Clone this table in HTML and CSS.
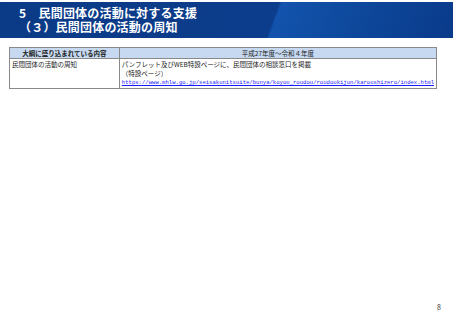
FILE: index.html
```html
<!DOCTYPE html>
<html lang="ja">
<head>
<meta charset="utf-8">
<link rel="stylesheet" href="styles.css">
</head>
<body>
<div class="page">
  <header class="band">
    <div class="title">5　民間団体の活動に対する支援</div>
    <div class="title">（３）民間団体の活動の周知</div>
  </header>
  <table class="tbl">
    <tr>
      <th class="c1">大綱に盛り込まれている内容</th>
      <th class="c2">平成27年度～令和４年度</th>
    </tr>
    <tr class="body">
      <td class="c1">民間団体の活動の周知</td>
      <td class="c2">パンフレット及びWEB特設ページに、民間団体の相談窓口を掲載<br>（特設ページ）<br><a class="link" href="#">https://www.mhlw.go.jp/seisakunitsuite/bunya/koyou_roudou/roudoukijun/karoushizero/index.html</a></td>
    </tr>
  </table>
  <div class="pnum">8</div>
</div>
</body>
</html>
```
FILE: styles.css
```css
html, body { margin: 0; padding: 0; background: #fff; }
.page { width: 453px; height: 320px; position: relative; font-family: "Noto Sans CJK JP", "Noto Sans", sans-serif; }
.band {
  height: 36px;
  margin-top: 2px;
  padding: 4px 0 0 19px;
  box-sizing: border-box;
  background: linear-gradient(110deg, #0b3a86 0%, #0c3d8c 60%, #1353ad 60.5%, #0e4a9e 75%, #0a3a8a 100%);
  color: #fff;
}
.title { font-size: 12px; font-weight: bold; line-height: 14px; letter-spacing: 0.2px; }
.tbl {
  margin: 9px 0 0 9px;
  width: 428px;
  border-collapse: collapse;
  font-size: 6.5px;
  color: #222;
}
.tbl th, .tbl td { border: 1px solid #8a8a8a; padding: 0 2px; }
.tbl th { background: #c6d9f0; height: 10px; font-weight: bold; line-height: 10px; }
.tbl th.c2 { font-weight: normal; }
.tbl td { vertical-align: top; line-height: 8.5px; padding-top: 1px; height: 28px; }
.c1 { width: 108px; }
.link { color: #1a1aff; font-family: "Liberation Mono", monospace; font-size: 5.6px; }
.pnum { position: absolute; left: 437px; top: 300px; font-size: 7px; color: #333; }
```
